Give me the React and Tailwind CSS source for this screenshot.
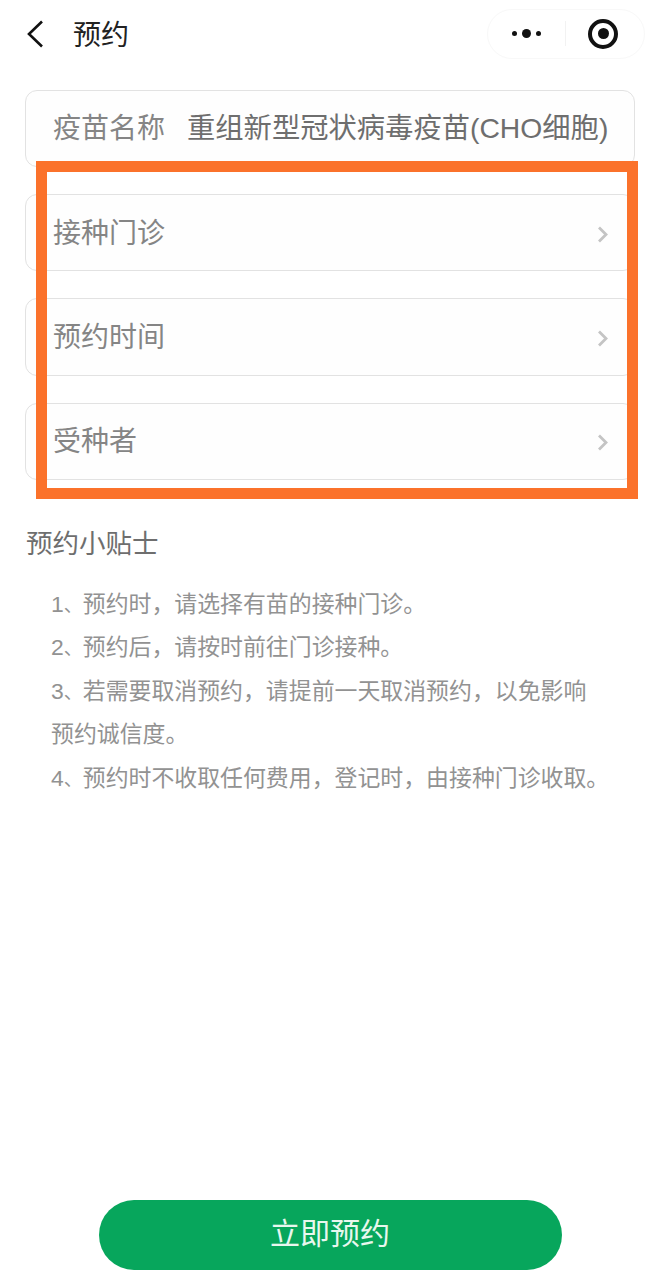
const font = { fontFamily: '"Liberation Sans", "Noto Sans CJK SC", sans-serif' };

function Row({ label }) {
  return (
    <div className="flex h-[77.3px] items-center justify-between rounded-[12px] border border-[#e2e2e2] bg-[#fefefe] pl-[27px] pr-[25px]">
      <span className="translate-y-[1px] text-[28px] leading-none text-[#858585]">{label}</span>
      <svg className="translate-y-[1.5px]" width="12" height="18" viewBox="0 0 12 18" fill="none" stroke="#c4c4c4" strokeWidth="2.8">
        <path d="M2 2l7 7-7 7" />
      </svg>
    </div>
  );
}

function Tip({ num, children }) {
  return (
    <li className="whitespace-nowrap">
      {num}
      <span className="text-[19px] leading-none">、</span>
      {children}
    </li>
  );
}

export default function App() {
  return (
    <div className="relative h-[1281px] w-[660px] overflow-hidden bg-white" style={font}>
      <div className="flex h-[67px] items-center pl-[26px] pr-[15px]">
        <svg width="18" height="28" viewBox="0 0 18 28" fill="none" stroke="#111" strokeWidth="2.6">
          <path d="M16 1.5L3 14l13 12.5" />
        </svg>
        <span className="ml-[29px] translate-y-[2px] text-[28px] leading-none text-[#222]">预约</span>
        <div className="ml-auto flex h-[50px] w-[158px] items-center rounded-full border border-[#f8f8f8]">
          <div className="flex w-[78px] items-center justify-center gap-[5px] border-r border-[#f2f2f2] py-[8px]">
            <span className="h-[5px] w-[5px] rounded-full bg-[#111]" />
            <span className="h-[9px] w-[9px] rounded-full bg-[#111]" />
            <span className="h-[5px] w-[5px] rounded-full bg-[#111]" />
          </div>
          <div className="flex flex-1 justify-center pr-[4px]">
            <div className="flex h-[30px] w-[30px] items-center justify-center rounded-full border-[4px] border-[#111]">
              <span className="h-[11px] w-[11px] rounded-full bg-[#111]" />
            </div>
          </div>
        </div>
      </div>

      <div className="mt-[23px] flex flex-col gap-[27px] pl-[25px] pr-[25px]">
        <div className="flex h-[77px] items-center rounded-[12px] border border-[#e2e2e2] bg-[#fefefe] pl-[27px]">
          <span className="text-[28px] leading-none text-[#858585]">疫苗名称</span>
          <span className="ml-[22px] whitespace-nowrap text-[28.3px] leading-none text-[#6e6e6e]">重组新型冠状病毒疫苗(CHO细胞)</span>
        </div>
        <Row label="接种门诊" />
        <Row label="预约时间" />
        <Row label="受种者" />
      </div>

      <div className="absolute left-[36px] top-[161px] h-[338px] w-[602px] border-[11px] border-[#fb722b]" />

      <div className="mt-[48px] pl-[26px]">
        <h2 className="text-[26.5px] font-normal leading-[32px] text-[#6e6e6e]">预约小贴士</h2>
        <ol className="mt-[23px] pl-[25px] text-[22.9px] leading-[43.5px] text-[#929292]">
          <Tip num="1">预约时，请选择有苗的接种门诊。</Tip>
          <Tip num="2">预约后，请按时前往门诊接种。</Tip>
          <Tip num="3">
            若需要取消预约，请提前一天取消预约，以免影响
            <br />
            预约诚信度。
          </Tip>
          <Tip num="4">预约时不收取任何费用，登记时，由接种门诊收取。</Tip>
        </ol>
      </div>

      <div className="absolute inset-x-0 bottom-[11px] flex justify-center">
        <button className="h-[70px] w-[463px] rounded-full bg-[#07a65c] pb-[3px] text-[30px] text-[#e8f7ee]">立即预约</button>
      </div>
    </div>
  );
}
